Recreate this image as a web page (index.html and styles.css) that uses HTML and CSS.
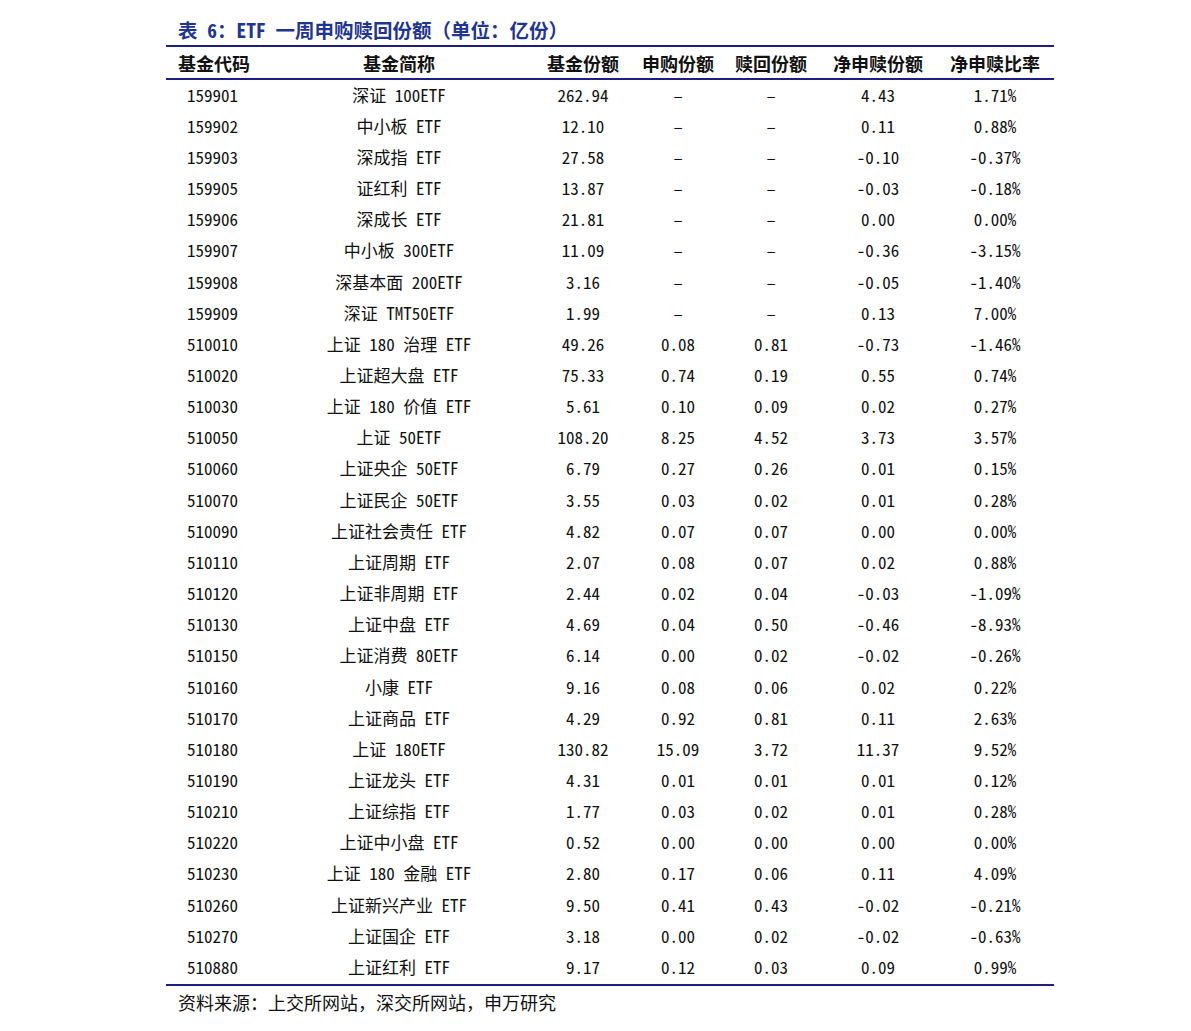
FILE: index.html
```html
<!DOCTYPE html>
<html lang="zh-CN">
<head>
<meta charset="utf-8">
<title>ETF 一周申购赎回份额</title>
<link rel="stylesheet" href="styles.css">
</head>
<body>
<div class="page">
  <div class="title">表 6：ETF 一周申购赎回份额（单位：亿份）</div>
  <table class="etf">
    <colgroup>
      <col class="c1"><col class="c2"><col class="c3"><col class="c4"><col class="c5"><col class="c6"><col class="c7">
    </colgroup>
    <thead>
      <tr><th class="code">基金代码</th><th>基金简称</th><th>基金份额</th><th>申购份额</th><th>赎回份额</th><th>净申赎份额</th><th>净申赎比率</th></tr>
    </thead>
    <tbody>
      <tr><td class="code">159901</td><td>深证 100ETF</td><td>262.94</td><td>–</td><td>–</td><td>4.43</td><td>1.71%</td></tr>
      <tr><td class="code">159902</td><td>中小板 ETF</td><td>12.10</td><td>–</td><td>–</td><td>0.11</td><td>0.88%</td></tr>
      <tr><td class="code">159903</td><td>深成指 ETF</td><td>27.58</td><td>–</td><td>–</td><td>-0.10</td><td>-0.37%</td></tr>
      <tr><td class="code">159905</td><td>证红利 ETF</td><td>13.87</td><td>–</td><td>–</td><td>-0.03</td><td>-0.18%</td></tr>
      <tr><td class="code">159906</td><td>深成长 ETF</td><td>21.81</td><td>–</td><td>–</td><td>0.00</td><td>0.00%</td></tr>
      <tr><td class="code">159907</td><td>中小板 300ETF</td><td>11.09</td><td>–</td><td>–</td><td>-0.36</td><td>-3.15%</td></tr>
      <tr><td class="code">159908</td><td>深基本面 200ETF</td><td>3.16</td><td>–</td><td>–</td><td>-0.05</td><td>-1.40%</td></tr>
      <tr><td class="code">159909</td><td>深证 TMT50ETF</td><td>1.99</td><td>–</td><td>–</td><td>0.13</td><td>7.00%</td></tr>
      <tr><td class="code">510010</td><td>上证 180 治理 ETF</td><td>49.26</td><td>0.08</td><td>0.81</td><td>-0.73</td><td>-1.46%</td></tr>
      <tr><td class="code">510020</td><td>上证超大盘 ETF</td><td>75.33</td><td>0.74</td><td>0.19</td><td>0.55</td><td>0.74%</td></tr>
      <tr><td class="code">510030</td><td>上证 180 价值 ETF</td><td>5.61</td><td>0.10</td><td>0.09</td><td>0.02</td><td>0.27%</td></tr>
      <tr><td class="code">510050</td><td>上证 50ETF</td><td>108.20</td><td>8.25</td><td>4.52</td><td>3.73</td><td>3.57%</td></tr>
      <tr><td class="code">510060</td><td>上证央企 50ETF</td><td>6.79</td><td>0.27</td><td>0.26</td><td>0.01</td><td>0.15%</td></tr>
      <tr><td class="code">510070</td><td>上证民企 50ETF</td><td>3.55</td><td>0.03</td><td>0.02</td><td>0.01</td><td>0.28%</td></tr>
      <tr><td class="code">510090</td><td>上证社会责任 ETF</td><td>4.82</td><td>0.07</td><td>0.07</td><td>0.00</td><td>0.00%</td></tr>
      <tr><td class="code">510110</td><td>上证周期 ETF</td><td>2.07</td><td>0.08</td><td>0.07</td><td>0.02</td><td>0.88%</td></tr>
      <tr><td class="code">510120</td><td>上证非周期 ETF</td><td>2.44</td><td>0.02</td><td>0.04</td><td>-0.03</td><td>-1.09%</td></tr>
      <tr><td class="code">510130</td><td>上证中盘 ETF</td><td>4.69</td><td>0.04</td><td>0.50</td><td>-0.46</td><td>-8.93%</td></tr>
      <tr><td class="code">510150</td><td>上证消费 80ETF</td><td>6.14</td><td>0.00</td><td>0.02</td><td>-0.02</td><td>-0.26%</td></tr>
      <tr><td class="code">510160</td><td>小康 ETF</td><td>9.16</td><td>0.08</td><td>0.06</td><td>0.02</td><td>0.22%</td></tr>
      <tr><td class="code">510170</td><td>上证商品 ETF</td><td>4.29</td><td>0.92</td><td>0.81</td><td>0.11</td><td>2.63%</td></tr>
      <tr><td class="code">510180</td><td>上证 180ETF</td><td>130.82</td><td>15.09</td><td>3.72</td><td>11.37</td><td>9.52%</td></tr>
      <tr><td class="code">510190</td><td>上证龙头 ETF</td><td>4.31</td><td>0.01</td><td>0.01</td><td>0.01</td><td>0.12%</td></tr>
      <tr><td class="code">510210</td><td>上证综指 ETF</td><td>1.77</td><td>0.03</td><td>0.02</td><td>0.01</td><td>0.28%</td></tr>
      <tr><td class="code">510220</td><td>上证中小盘 ETF</td><td>0.52</td><td>0.00</td><td>0.00</td><td>0.00</td><td>0.00%</td></tr>
      <tr><td class="code">510230</td><td>上证 180 金融 ETF</td><td>2.80</td><td>0.17</td><td>0.06</td><td>0.11</td><td>4.09%</td></tr>
      <tr><td class="code">510260</td><td>上证新兴产业 ETF</td><td>9.50</td><td>0.41</td><td>0.43</td><td>-0.02</td><td>-0.21%</td></tr>
      <tr><td class="code">510270</td><td>上证国企 ETF</td><td>3.18</td><td>0.00</td><td>0.02</td><td>-0.02</td><td>-0.63%</td></tr>
      <tr><td class="code">510880</td><td>上证红利 ETF</td><td>9.17</td><td>0.12</td><td>0.03</td><td>0.09</td><td>0.99%</td></tr>
    </tbody>
  </table>
  <div class="source">资料来源：上交所网站，深交所网站，申万研究</div>
</div>
</body>
</html>
```
FILE: styles.css
```css
html, body {
  margin: 0;
  padding: 0;
  background: #ffffff;
}
body {
  font-family: "Noto Sans Mono CJK SC", "Noto Sans CJK SC", sans-serif;
  color: #111111;
}
.page {
  margin-left: 166px;
  width: 888px;
  padding-top: 17px;
}
.title {
  padding-left: 12px;
  font-size: 19.5px;
  line-height: 26px;
  font-weight: bold;
  color: #1f3590;
  margin-bottom: 2px;
}
.etf {
  width: 888px;
  border-collapse: collapse;
  table-layout: fixed;
  border-top: 2px solid #1e1e80;
  border-bottom: 2px solid #1e1e80;
}
.c1 { width: 100px; }
.c2 { width: 266px; }
.c3 { width: 102px; }
.c4 { width: 88px; }
.c5 { width: 98px; }
.c6 { width: 116px; }
.c7 { width: 118px; }
.etf th {
  height: 31px;
  padding: 0;
  font-size: 18px;
  font-weight: bold;
  text-align: center;
  border-bottom: 2px solid #1e1e80;
  white-space: nowrap;
}
.etf th.code {
  text-align: left;
  padding-left: 12px;
}
.etf td {
  height: 29.17px;
  padding: 0 0 2px 0;
  font-size: 17px;
  line-height: 22px;
  text-align: center;
  white-space: nowrap;
}
.etf td.code {
  text-align: left;
  padding-left: 21px;
}
.source {
  padding-left: 12px;
  margin-top: 3px;
  font-size: 18px;
  line-height: 26px;
  color: #111111;
}
```
